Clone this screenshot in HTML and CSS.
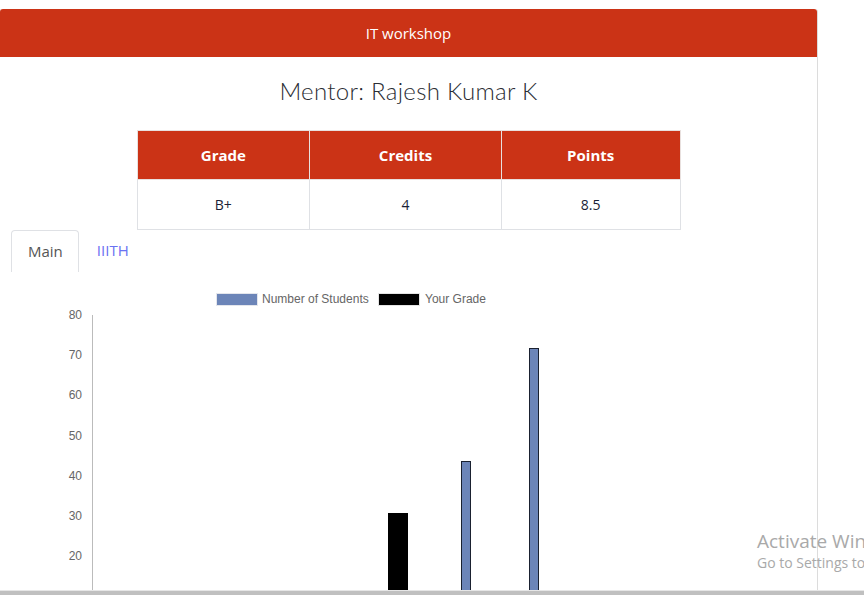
FILE: index.html
```html
<!DOCTYPE html>
<html>
<head>
<meta charset="utf-8">
<link rel="stylesheet" href="styles.css">
</head>
<body>
<div class="page">
  <div class="card">
    <div class="card-header">IT workshop</div>
    <div class="card-body">
      <h2 class="mentor">Mentor: Rajesh Kumar K</h2>
      <table class="grades">
        <thead>
          <tr><th class="c1">Grade</th><th class="c2">Credits</th><th class="c3">Points</th></tr>
        </thead>
        <tbody>
          <tr><td>B+</td><td>4</td><td>8.5</td></tr>
        </tbody>
      </table>
      <div class="tabs">
        <div class="tab active">Main</div>
        <div class="tab link">IIITH</div>
      </div>
      <svg class="chart" width="816" height="317" viewBox="0 0 816 317">
        <g font-family="Liberation Sans, Arial, sans-serif" font-size="12" fill="#666">
          <rect x="216.5" y="20.5" width="41" height="12" fill="#6c85b8" stroke="#e4e6ec" stroke-width="1"/>
          <text x="262" y="30">Number of Students</text>
          <rect x="378.5" y="20.5" width="41" height="12" fill="#000" stroke="#e4e4e4" stroke-width="1"/>
          <text x="425" y="30">Your Grade</text>
        </g>
        <g font-family="Liberation Sans, Arial, sans-serif" font-size="12" fill="#666" text-anchor="end">
          <text x="82" y="46">80</text>
          <text x="82" y="86">70</text>
          <text x="82" y="126">60</text>
          <text x="82" y="167">50</text>
          <text x="82" y="207">40</text>
          <text x="82" y="247">30</text>
          <text x="82" y="287">20</text>
        </g>
        <line x1="92.5" y1="42" x2="92.5" y2="318" stroke="#bbb" stroke-width="1"/>
        <rect x="388" y="240" width="20" height="80" fill="#000"/>
        <rect x="461.5" y="188.5" width="9" height="130" fill="#6c85b8" stroke="#1a2130" stroke-width="1"/>
        <rect x="529.5" y="75.5" width="9" height="243" fill="#6c85b8" stroke="#1a2130" stroke-width="1"/>
      </svg>
    </div>
  </div>
  <div class="watermark">
    <div class="wm-title">Activate Windows</div>
    <div class="wm-sub">Go to Settings to activate Windows.</div>
  </div>
  <div class="bottom-bar"></div>
</div>
</body>
</html>
```
FILE: styles.css
```css
html, body {
  margin: 0;
  padding: 0;
  background: #fff;
}
.page {
  position: relative;
  width: 864px;
  height: 595px;
  overflow: hidden;
  font-family: "Open Sans", "Liberation Sans", sans-serif;
}
.card {
  margin-top: 9px;
  margin-left: -1px;
  width: 819px;
  height: 600px;
  border: 1px solid #dcdcdc;
  border-top: none;
  border-radius: 3px 3px 0 0;
  box-sizing: border-box;
}
.card-header {
  height: 48px;
  background: #cb3316;
  color: #fff;
  font-size: 15px;
  line-height: 48px;
  text-align: center;
  border-radius: 3px 3px 0 0;
}
.card-body {
  display: flex;
  flex-direction: column;
  align-items: center;
}
.mentor {
  margin: 17px 0 0;
  height: 56px;
  font-family: "Lato", sans-serif;
  font-weight: 300;
  font-size: 24px;
  line-height: 34px;
  color: #2a2d33;
  letter-spacing: 0.3px;
}
.grades {
  border-collapse: collapse;
  width: 544px;
  margin-left: 0;
}
.grades th, .grades td {
  border: 1px solid #dfe1e5;
  text-align: center;
  font-size: 14px;
}
.grades th {
  background: #cb3316;
  color: #fff;
  font-weight: 700;
  font-size: 15px;
  height: 48px;
  padding: 0;
  border-color: #e8e0de;
}
.grades td {
  color: #1a1f36;
  height: 49px;
  padding: 0;
}
.c1 { width: 172px; }
.c2 { width: 191px; }
.c3 { width: 178px; }
.tabs {
  align-self: stretch;
  display: flex;
  padding-left: 11px;
  height: 42px;
}
.tab {
  font-size: 15px;
  line-height: 41px;
  padding: 0 15px;
}
.tab.active {
  border: 1px solid #dfe1e5;
  border-bottom: none;
  border-radius: 4px 4px 0 0;
  color: #555;
  padding: 0 15px 0 16px;
}
.tab.link {
  color: #6a72f2;
  padding-left: 18px;
}
.chart {
  align-self: flex-start;
  display: block;
  margin-top: 1px;
}
.watermark {
  position: absolute;
  left: 757px;
  top: 529px;
  color: #a9a9a9;
  font-family: "Open Sans", "Liberation Sans", sans-serif;
  white-space: nowrap;
}
.wm-title {
  font-size: 19px;
  line-height: 24px;
}
.wm-sub {
  font-size: 14px;
  line-height: 20px;
}
.bottom-bar {
  position: absolute;
  left: 0;
  top: 590px;
  width: 864px;
  height: 5px;
  background: #c0c0c0;
  border-top: 1px solid #e6e6e6;
  box-sizing: border-box;
}
```
